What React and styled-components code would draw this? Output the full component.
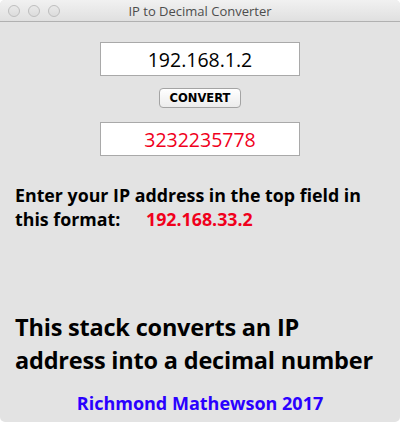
import styled, { createGlobalStyle } from "styled-components";

const GlobalStyle = createGlobalStyle`
  html, body {
    margin: 0;
    padding: 0;
    background: #ffffff;
  }
  body {
    font-family: "Open Sans", "Noto Sans", sans-serif;
  }
`;

const Window = styled.div`
  width: 400px;
  height: 422px;
  background: #e3e3e3;
  border-radius: 5px;
  overflow: hidden;
  display: flex;
  flex-direction: column;
`;

const TitleBar = styled.div`
  height: 21px;
  border-bottom: 1px solid #b1b1b1;
  background: linear-gradient(#f1f1f1, #e0e0e0);
  display: flex;
  align-items: center;
  position: relative;
`;

const Lights = styled.div`
  display: flex;
  gap: 8px;
  padding-left: 8px;
`;

const Light = styled.span`
  box-sizing: border-box;
  width: 12px;
  height: 12px;
  border-radius: 50%;
  border: 1px solid #bdbdbd;
  background: linear-gradient(#e9e9e9, #dcdcdc);
`;

const Title = styled.div`
  position: absolute;
  left: 0;
  right: 0;
  text-align: center;
  font-size: 13px;
  color: #4d4d4d;
`;

const Content = styled.div`
  flex: 1;
  display: flex;
  flex-direction: column;
  align-items: center;
  padding-top: 20px;
`;

const Field = styled.div`
  width: 198px;
  height: 32px;
  border: 1px solid #a9a9a9;
  background: #ffffff;
  display: flex;
  align-items: center;
  justify-content: center;
  font-size: 19.5px;
  color: ${(p) => p.$color || "#000"};
`;

const Button = styled.button`
  margin: 12px 0 14px;
  width: 82px;
  height: 20px;
  padding: 0;
  border: 1px solid #a4a4a4;
  border-radius: 4px;
  background: linear-gradient(#ffffff, #ececec);
  font-family: "DejaVu Sans", sans-serif;
  font-weight: bold;
  font-size: 11.5px;
  color: #000;
`;

const Instructions = styled.div`
  align-self: stretch;
  margin: 28px 15px 0;
  font-weight: bold;
  font-size: 17.8px;
  line-height: 23.5px;
  color: #000;
  white-space: nowrap;
`;

const FormatRow = styled.div`
  display: flex;
`;

const Label = styled.span`
  width: 131px;
`;

const Sample = styled.span`
  color: #f0001c;
`;

const Blurb = styled.div`
  align-self: stretch;
  margin: 80px 15px 0;
  font-weight: bold;
  font-size: 23.5px;
  letter-spacing: -0.2px;
  line-height: 33px;
  color: #000;
  white-space: nowrap;
`;

const Credit = styled.div`
  margin-top: 14px;
  font-weight: bold;
  font-size: 18px;
  color: #2a00ff;
`;

export default function App() {
  return (
    <>
      <GlobalStyle />
      <Window>
        <TitleBar>
          <Lights>
            <Light />
            <Light />
            <Light />
          </Lights>
          <Title>IP to Decimal Converter</Title>
        </TitleBar>
        <Content>
          <Field>192.168.1.2</Field>
          <Button>CONVERT</Button>
          <Field $color="#f0001c">3232235778</Field>
          <Instructions>
            Enter your IP address in the top field in
            <FormatRow>
              <Label>this format:</Label>
              <Sample>192.168.33.2</Sample>
            </FormatRow>
          </Instructions>
          <Blurb>
            This stack converts an IP
            <br />
            address into a decimal number
          </Blurb>
          <Credit>Richmond Mathewson 2017</Credit>
        </Content>
      </Window>
    </>
  );
}
